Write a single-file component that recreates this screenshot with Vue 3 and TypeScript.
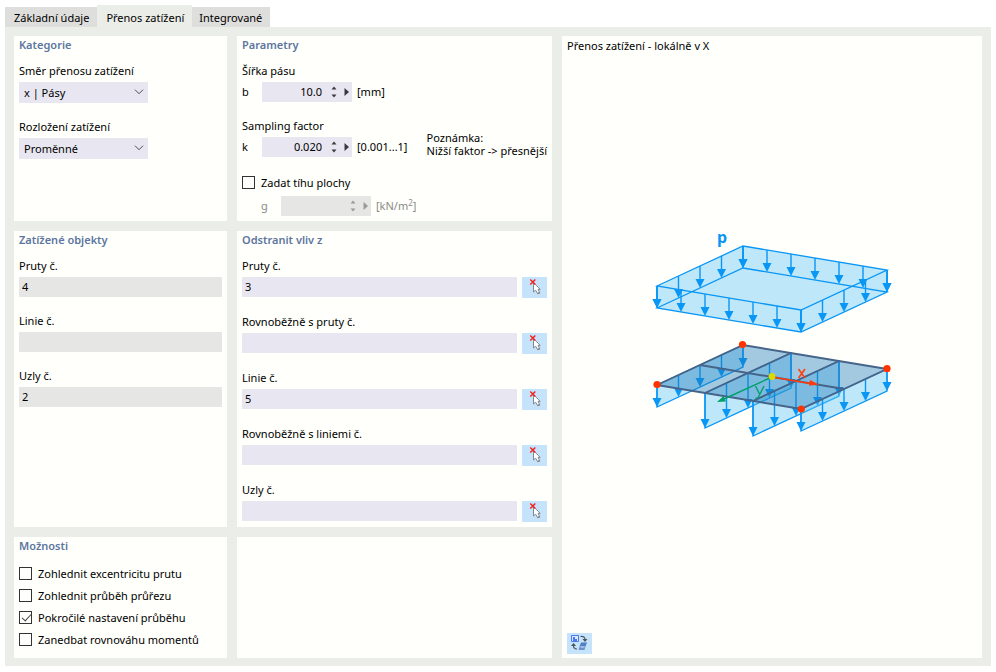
<script setup lang="ts">
import { reactive, ref } from 'vue'

interface Point { x: number; y: number }

const tabs = ['Základní údaje', 'Přenos zatížení', 'Integrované']
const activeTab = ref(1)

const direction = ref('x | Pásy')
const distribution = ref('Proměnné')
const width = ref('10.0')
const factor = ref('0.020')
const weightOn = ref(false)
const weight = ref('')

const loaded = [
  { id: 'loaded-members', label: 'Pruty č.', value: '4' },
  { id: 'loaded-lines', label: 'Linie č.', value: '' },
  { id: 'loaded-nodes', label: 'Uzly č.', value: '2' },
]

const removed = reactive([
  { id: 'removed-members', label: 'Pruty č.', value: '3' },
  { id: 'removed-parallel-members', label: 'Rovnoběžně s pruty č.', value: '' },
  { id: 'removed-lines', label: 'Linie č.', value: '5' },
  { id: 'removed-parallel-lines', label: 'Rovnoběžně s liniemi č.', value: '' },
  { id: 'removed-nodes', label: 'Uzly č.', value: '' },
])

const options = reactive([
  { label: 'Zohlednit excentricitu prutu', on: false },
  { label: 'Zohlednit průběh průřezu', on: false },
  { label: 'Pokročilé nastavení průběhu', on: true },
  { label: 'Zanedbat rovnováhu momentů', on: false },
])

function stepWidth(delta: number) {
  width.value = Math.max(0, Number(width.value) + delta).toFixed(1)
}
function stepFactor(delta: number) {
  factor.value = Math.min(1, Math.max(0.001, Number(factor.value) + delta)).toFixed(3)
}

// Points along an edge, both ends included
function along(a: Point, b: Point, parts: number): Point[] {
  return Array.from({ length: parts + 1 }, (_, i) => ({
    x: a.x + ((b.x - a.x) * i) / parts,
    y: a.y + ((b.y - a.y) * i) / parts,
  }))
}

const left: Point = { x: 657, y: 286 }
const back: Point = { x: 743, y: 246 }
const right: Point = { x: 887, y: 270 }
const front: Point = { x: 801, y: 310 }

const slabArrows = [
  ...along(left, back, 4),
  ...along(back, right, 6),
  ...along(left, front, 6),
  ...along(front, right, 4),
]

// Line loads hanging below the plate, one per strip edge
const strips = [0, 1, 2, 3].map((i) => {
  const a = { x: 657 + 48 * i, y: 385 + 8 * i }
  const b = { x: 743 + 48 * i, y: 345 + 8 * i }
  const h = i === 0 || i === 3 ? 22 : 35
  return {
    h,
    points: `${a.x},${a.y} ${b.x},${b.y} ${b.x},${b.y + h} ${a.x},${a.y + h}`,
    arrows: along(a, b, 4),
  }
})

function shaft(p: Point, h: number) {
  return `M${p.x} ${p.y}v${h - 7}`
}
function head(p: Point, h: number) {
  return `M${p.x - 4.5} ${p.y + h - 9}h9l-4.500 9z`
}
</script>

<template>
  <main class="dialog">
    <nav class="tabs" role="tablist">
      <button
        v-for="(tab, i) in tabs"
        :key="tab"
        type="button"
        role="tab"
        class="tab"
        :class="{ active: activeTab === i }"
        :aria-selected="activeTab === i"
        @click="activeTab = i"
      >{{ tab }}</button>
    </nav>

    <div class="body">
      <section class="panel category">
        <h2>Kategorie</h2>
        <div class="fields">
          <div class="field">
            <label for="direction">Směr přenosu zatížení</label>
            <div class="select">
              <select id="direction" v-model="direction">
                <option>x | Pásy</option>
              </select>
              <svg viewBox="0 0 10 6" aria-hidden="true"><path d="M1 .7L5 4.7L9 .7" /></svg>
            </div>
          </div>
          <div class="field">
            <label for="distribution">Rozložení zatížení</label>
            <div class="select">
              <select id="distribution" v-model="distribution">
                <option>Proměnné</option>
              </select>
              <svg viewBox="0 0 10 6" aria-hidden="true"><path d="M1 .7L5 4.7L9 .7" /></svg>
            </div>
          </div>
        </div>
      </section>

      <section class="panel">
        <h2>Parametry</h2>
        <div class="fields">
          <div class="field">
            <span class="caption">Šířka pásu</span>
            <div class="line">
              <label class="symbol" for="width">b</label>
              <div class="spin">
                <input id="width" v-model="width" type="text" />
                <div class="steps">
                  <button type="button" aria-label="+" @click="stepWidth(1)"><svg viewBox="0 0 6 3"><path d="M.5 3L3 0L5.5 3z" /></svg></button>
                  <button type="button" aria-label="-" @click="stepWidth(-1)"><svg viewBox="0 0 6 3"><path d="M.5 0L3 3L5.5 0z" /></svg></button>
                </div>
                <button type="button" class="more" aria-label="b"><svg viewBox="0 0 5 8"><path d="M.5 0L5 4L.5 8z" /></svg></button>
              </div>
              <span>[mm]</span>
            </div>
          </div>
          <div class="with-note">
            <div class="field">
              <span class="caption">Sampling factor</span>
              <div class="line">
                <label class="symbol" for="factor">k</label>
                <div class="spin">
                  <input id="factor" v-model="factor" type="text" />
                  <div class="steps">
                    <button type="button" aria-label="+" @click="stepFactor(0.001)"><svg viewBox="0 0 6 3"><path d="M.5 3L3 0L5.5 3z" /></svg></button>
                    <button type="button" aria-label="-" @click="stepFactor(-0.001)"><svg viewBox="0 0 6 3"><path d="M.5 0L3 3L5.5 0z" /></svg></button>
                  </div>
                  <button type="button" class="more" aria-label="k"><svg viewBox="0 0 5 8"><path d="M.5 0L5 4L.5 8z" /></svg></button>
                </div>
                <span>[0.001...1]</span>
              </div>
            </div>
            <p class="note">Poznámka:<br />Nižší faktor -&gt; přesnější</p>
          </div>
          <div class="weight">
            <label class="check"><input v-model="weightOn" type="checkbox" /><span>Zadat tíhu plochy</span></label>
            <div class="line indent" :class="{ off: !weightOn }">
              <label class="symbol" for="weight">g</label>
              <div class="spin">
                <input id="weight" v-model="weight" type="text" :disabled="!weightOn" />
                <div class="steps">
                  <button type="button" aria-label="+" :disabled="!weightOn"><svg viewBox="0 0 6 3"><path d="M.5 3L3 0L5.5 3z" /></svg></button>
                  <button type="button" aria-label="-" :disabled="!weightOn"><svg viewBox="0 0 6 3"><path d="M.5 0L3 3L5.5 0z" /></svg></button>
                </div>
                <button type="button" class="more" aria-label="g" :disabled="!weightOn"><svg viewBox="0 0 5 8"><path d="M.5 0L5 4L.5 8z" /></svg></button>
              </div>
              <span>[kN/m<sup>2</sup>]</span>
            </div>
          </div>
        </div>
      </section>

      <section class="panel">
        <h2>Zatížené objekty</h2>
        <div class="fields">
          <div v-for="item in loaded" :key="item.id" class="field">
            <label :for="item.id">{{ item.label }}</label>
            <input :id="item.id" class="text readonly" type="text" :value="item.value" readonly />
          </div>
        </div>
      </section>

      <section class="panel">
        <h2>Odstranit vliv z</h2>
        <div class="fields">
          <div v-for="item in removed" :key="item.id" class="field">
            <label :for="item.id">{{ item.label }}</label>
            <div class="pick">
              <input :id="item.id" v-model="item.value" class="text" type="text" />
              <button type="button" class="tool" :aria-label="item.label">
                <svg viewBox="0 0 25 21" width="25" height="21" aria-hidden="true">
                  <path d="M11.500 5.500v9.500l2.200-1.800l1.900 3.500l2.200-1l-1.800-3.300h2.200z" fill="#fff" stroke="#85888e" />
                  <path d="M15.800 16.500l2-1" stroke="#85888e" stroke-width="1.600" />
                  <path d="M8.300 2.500l5 5M13.300 2.500l-5 5" stroke="#f5221e" stroke-width="1.500" />
                </svg>
              </button>
            </div>
          </div>
        </div>
      </section>

      <section class="panel">
        <h2>Možnosti</h2>
        <div class="options">
          <label v-for="option in options" :key="option.label" class="check">
            <input v-model="option.on" type="checkbox" /><span>{{ option.label }}</span>
          </label>
        </div>
      </section>

      <section class="panel"></section>

      <section class="panel preview">
        <h3>Přenos zatížení - lokálně v X</h3>
        <svg class="diagram" viewBox="650 227 244 235" role="img" aria-label="Přenos zatížení - lokálně v X">
          <g fill="#5cc5f7" fill-opacity=".4" stroke="#0a96f5" stroke-width="1.300">
            <path d="M657 286L743 246L887 270V292L801 332L657 308z" stroke="none" />
            <path d="M657 286L743 246L887 270L801 310zM657 308L743 268L887 292L801 332zM657 286V308M743 246V268M887 270V292M801 310V332" fill="none" />
          </g>
          <g v-for="(p, i) in slabArrows" :key="i">
            <path :d="shaft(p, 22)" stroke="#0a96f5" stroke-width="1.400" />
            <path :d="head(p, 22)" fill="#0a96f5" />
          </g>
          <text x="717" y="243" class="load-name">p</text>

          <g v-for="(strip, i) in strips" :key="'s' + i">
            <polygon :points="strip.points" fill="#5cc5f7" fill-opacity=".4" stroke="#0a96f5" stroke-width="1.300" />
            <template v-for="(p, j) in strip.arrows" :key="j">
              <path :d="shaft(p, strip.h)" stroke="#0a96f5" stroke-width="1.400" />
              <path :d="head(p, strip.h)" fill="#0a96f5" />
            </template>
          </g>
          <path d="M657 385L743 345L887 369L801 409z" fill="#1977b8" fill-opacity=".4" />
          <path
            d="M657 385L743 345L887 369L801 409zM700 365L844 389M705 393L791 353M753 401L839 361"
            fill="none" stroke="#46648a" stroke-width="1.900"
          />

          <path d="M772 377L724 399" stroke="#00a06c" stroke-width="1.400" />
          <path d="M717 402l6.500-6l2.500 5.400z" fill="#00a06c" />
          <path d="M772 377L813 384" stroke="#ff3c0a" stroke-width="1.700" />
          <path d="M819 384.500l-9-4.400l-1 5.600z" fill="#ff3c0a" />
          <path d="M755.500 386l4 8M764 386l-5.500 11q-.8 1.400-3 1" fill="none" stroke="#00a06c" stroke-width="1.400" />
          <path d="M798.500 369l6.500 9M805 369l-6.500 9" stroke="#ff3c0a" stroke-width="1.500" />
          <circle cx="772" cy="376.500" r="3.400" fill="#d9dc00" />
          <g fill="#ff3300">
            <circle cx="657" cy="384.500" r="3.600" />
            <circle cx="742.500" cy="344.500" r="3.600" />
            <circle cx="887" cy="368.700" r="3.600" />
            <circle cx="801.300" cy="409" r="3.600" />
          </g>
        </svg>
        <button type="button" class="tool" aria-label="Přenos zatížení">
          <svg viewBox="0 0 25 21" width="25" height="21" aria-hidden="true">
            <path d="M4.500 2.500h7v6h-7z" fill="#dce9ff" stroke="#4a78f0" />
            <path d="M6 8V4h2v2h2v2z" fill="#4a78f0" />
            <path d="M14 9.500h6l-1.500 4h-6z" fill="#4f7fc4" />
            <path d="M12.500 13.500h6l-1 3.500h-6z" fill="#6d93cd" />
            <path d="M13.500 14h4" stroke="#c9dcf2" />
            <path d="M13.500 3.500q4.500-.5 4.500 3M6.500 11.500q-.5 4.500 3.500 4.500" fill="none" stroke="#4c5460" stroke-width="1.200" />
            <path d="M15.500 6h5l-2.500 3zM4 13h5l-2.500-3z" fill="#4c5460" />
          </svg>
        </button>
      </section>
    </div>
  </main>
</template>

<style>
body {
  margin: 0;
  background: #fff;
}
</style>

<style scoped>
* {
  box-sizing: border-box;
}
.dialog {
  display: flex;
  flex-direction: column;
  min-height: 100vh;
  padding: 5px 5px 6px;
  font: 11px/20px "Noto Sans", "Open Sans", sans-serif;
  color: #000;
}
button,
input,
select {
  margin: 0;
  padding: 0;
  border: 0;
  border-radius: 0;
  font: inherit;
  color: inherit;
  background: none;
}
.tabs {
  display: flex;
  align-items: flex-end;
}
.tab {
  height: 20px;
  padding: 2px 8px 0 9px;
  line-height: 18px;
  background: #dededd;
}
.tab.active {
  height: 22px;
  padding-top: 4px;
  background: #ebede8;
}
.tab:last-child {
  padding: 2px 8px 0 7px;
}
.body {
  flex: 1;
  display: grid;
  grid-template-columns: 213fr 315fr 420fr;
  grid-template-rows: auto 1fr auto;
  gap: 10px;
  padding: 9px 9px 8px;
  background: #ebede8;
}
.panel {
  min-width: 0;
  padding: 0 5px 5px;
  background: #fffffb;
}
h2 {
  margin: 0 0 7px;
  font-size: 11px;
  line-height: 18px;
  font-weight: 600;
  color: #5c76a0;
}
.fields {
  display: flex;
  flex-direction: column;
  gap: 14px;
}
.field {
  display: flex;
  flex-direction: column;
  gap: 1px;
}
.select {
  position: relative;
  width: 129px;
}
.select select {
  display: block;
  width: 100%;
  height: 21px;
  padding: 0 20px 0 5px;
  appearance: none;
  background: #e8e7f1;
}
.select svg {
  position: absolute;
  right: 4px;
  top: 7px;
  width: 10px;
  height: 6px;
  fill: none;
  stroke: #4a4a50;
  pointer-events: none;
}
.line {
  display: flex;
  align-items: center;
  height: 20px;
}
.symbol {
  width: 20px;
}
.spin {
  display: flex;
  width: 90px;
  height: 20px;
  margin-right: 5px;
  background: #e8e7f1;
}
.spin input {
  width: 66px;
  padding-right: 6px;
  text-align: right;
}
.steps {
  display: flex;
  flex-direction: column;
  justify-content: center;
  gap: 4px;
  width: 12px;
}
.steps button {
  display: flex;
  justify-content: center;
  height: 4px;
}
.steps svg {
  width: 6px;
  height: 4px;
}
.more {
  display: flex;
  align-items: center;
  justify-content: center;
  width: 12px;
}
.more svg {
  width: 5px;
  height: 8px;
}
.spin svg {
  fill: #3a3a3e;
}
.with-note {
  display: flex;
  justify-content: space-between;
  align-items: flex-end;
}
.note {
  margin: 0;
  line-height: 13px;
  white-space: nowrap;
}
.weight {
  display: flex;
  flex-direction: column;
  gap: 2px;
}
.weight .check {
  height: 23px;
  padding-top: 0;
}
.indent {
  padding-left: 19px;
}
.off {
  color: #8a8a88;
}
.off .spin {
  background: #e6e6e4;
}
.off .spin svg {
  fill: #9a9a9a;
}
sup {
  font-size: 8px;
  line-height: 1px;
  vertical-align: 4px;
}
.text {
  width: 100%;
  height: 20px;
  padding: 0 3px;
  background: #e8e7f1;
}
.text.readonly {
  background: #e6e6e4;
}
.pick {
  display: flex;
  gap: 5px;
}
.tool {
  flex: none;
  display: block;
  width: 25px;
  height: 21px;
  background: #c5e3fa;
}
.tool svg {
  display: block;
  fill: none;
}
.options {
  padding-bottom: 3px;
}
.check {
  display: flex;
  align-items: center;
  gap: 6px;
  height: 22px;
  padding-top: 1px;
}
.check input {
  position: relative;
  flex: none;
  width: 13px;
  height: 13px;
  appearance: none;
  border: 1px solid #333;
}
.check input:checked::after {
  content: "";
  position: absolute;
  left: 4px;
  top: 0;
  width: 4px;
  height: 8px;
  border: solid #444;
  border-width: 0 1px 1px 0;
  transform: rotate(42deg);
}
.preview {
  grid-column: 3;
  grid-row: 1 / 4;
  display: flex;
  flex-direction: column;
  padding-bottom: 4px;
}
h3 {
  margin: 0;
  font-size: 11px;
  line-height: 20px;
  font-weight: 400;
}
.diagram {
  flex: 1;
  align-self: center;
  width: 244px;
  fill: none;
}
.load-name {
  font: 700 16px "Noto Sans", sans-serif;
  fill: #0a96f5;
}
</style>
